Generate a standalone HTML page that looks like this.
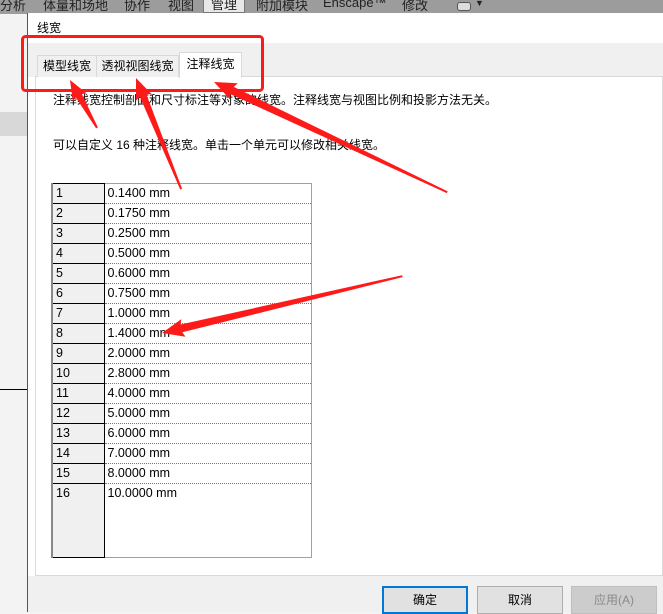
<!DOCTYPE html>
<html><head><meta charset="utf-8"><style>
*{margin:0;padding:0;box-sizing:border-box}
body{width:663px;height:612px;overflow:hidden;position:relative;background:#f3f3f3;font-family:"Liberation Sans","Noto Sans CJK SC",sans-serif;font-size:12px;color:#000}
.abs{position:absolute}
.rib{left:0;top:0;width:663px;height:14px;background:#9c9c9c;overflow:hidden}
.rib span{position:absolute;top:-5px;font-size:13px;color:#222}
.dlg{left:27px;top:13px;width:636px;height:599px;background:#fff;border-left:1px solid #555}
.tabs{left:28px;top:43px;width:635px;height:34px;background:#f0f0f0}
.tab{position:absolute;height:22px;border:1px solid #d9d9d9;border-bottom:none;background:#f0f0f0;font-size:12px;line-height:21px;text-align:center}
.panel{left:35px;top:76px;width:628px;height:500px;background:#fff;border:1px solid #d9d9d9}
.foot{left:28px;top:576px;width:635px;height:36px;background:#f0f0f0}
.btn{position:absolute;top:586px;width:86px;height:28px;background:#e1e1e1;border:1px solid #adadad;text-align:center;line-height:26px;font-size:12px}
table{position:absolute;left:51px;top:183px;width:261px;border-collapse:collapse;border:1px solid #a0a0a0}
td{height:20px;font-size:12.5px;padding:0 0 0 3px;line-height:19px;vertical-align:top}
td.n{width:52px;background:#f0f0f0;border:1px solid #000;border-left:2px solid #888}
td.v{border-bottom:1px dotted #777;border-right:1px dotted #777}
</style></head><body>
<div class="abs rib">
<span style="left:0">分析</span><span style="left:43px">体量和场地</span><span style="left:124px">协作</span><span style="left:168px">视图</span>
<span style="left:203px;top:-3px;width:42px;height:16px;background:#e8e8e8;border:1px solid #777;text-align:center;line-height:14px">管理</span>
<span style="left:256px">附加模块</span><span style="left:323px">Enscape™</span><span style="left:402px">修改</span>
<span style="left:457px;top:2px;width:14px;height:9px;border:1px solid #555;border-radius:3px;background:#ddd"></span><span style="left:475px;top:-2px;font-size:9px">▼</span>
</div>
<div class="abs" style="left:0;top:112px;width:28px;height:24px;background:#d8d8d8"></div>
<div class="abs" style="left:0;top:389px;width:28px;height:1px;background:#000"></div>
<div class="abs dlg"></div>
<div class="abs" style="left:37px;top:19px;font-size:12px">线宽</div>
<div class="abs tabs"></div>
<div class="abs panel"></div>
<div class="tab" style="left:37px;top:55px;width:60px">模型线宽</div>
<div class="tab" style="left:96px;top:55px;width:83px">透视视图线宽</div>
<div class="tab" style="left:179px;top:52px;width:63px;height:26px;background:#fff;line-height:22px">注释线宽</div>
<div class="abs" style="left:53px;top:91px">注释线宽控制剖面和尺寸标注等对象的线宽。注释线宽与视图比例和投影方法无关。</div>
<div class="abs" style="left:53px;top:136px">可以自定义 16 种注释线宽。单击一个单元可以修改相关线宽。</div>
<table>
<tr><td class="n">1</td><td class="v">0.1400 mm</td></tr>
<tr><td class="n">2</td><td class="v">0.1750 mm</td></tr>
<tr><td class="n">3</td><td class="v">0.2500 mm</td></tr>
<tr><td class="n">4</td><td class="v">0.5000 mm</td></tr>
<tr><td class="n">5</td><td class="v">0.6000 mm</td></tr>
<tr><td class="n">6</td><td class="v">0.7500 mm</td></tr>
<tr><td class="n">7</td><td class="v">1.0000 mm</td></tr>
<tr><td class="n">8</td><td class="v">1.4000 mm</td></tr>
<tr><td class="n">9</td><td class="v">2.0000 mm</td></tr>
<tr><td class="n">10</td><td class="v">2.8000 mm</td></tr>
<tr><td class="n">11</td><td class="v">4.0000 mm</td></tr>
<tr><td class="n">12</td><td class="v">5.0000 mm</td></tr>
<tr><td class="n">13</td><td class="v">6.0000 mm</td></tr>
<tr><td class="n">14</td><td class="v">7.0000 mm</td></tr>
<tr><td class="n">15</td><td class="v">8.0000 mm</td></tr>
<tr><td class="n" style="height:74px">16</td><td class="v" style="height:74px">10.0000 mm</td></tr>
</table>
<div class="abs foot"></div>
<div class="btn" style="left:382px;border:2px solid #0078d7;line-height:24px">确定</div>
<div class="btn" style="left:477px">取消</div>
<div class="btn" style="left:571px;background:#cccccc;border-color:#bfbfbf;color:#8a8a8a">应用(A)</div>
<svg class="abs" style="left:0;top:0" width="663" height="612">
<rect x="22.5" y="36.5" width="240" height="54" rx="3" fill="none" stroke="#ff1a1a" stroke-width="3"/>
<g fill="#ff1a1a">
<g transform="translate(70,80) rotate(60.6)"><polygon points="0,0 20,-8 18,-3.5 55,-1 55,1 18,3.5 20,8"/></g>
<g transform="translate(136,78) rotate(67.9)"><polygon points="0,0 21,-8.5 19,-3.5 120,-1 120,1 19,3.5 21,8.5"/></g>
<g transform="translate(214,82) rotate(25.3)"><polygon points="0,0 22,-9 20,-4 258,-1 258,1 20,4 22,9"/></g>
<g transform="translate(162,333) rotate(-13.3)"><polygon points="0,0 22,-9 20,-4 247,-1 247,1 20,4 22,9"/></g>
</g>
</svg>
</body></html>
